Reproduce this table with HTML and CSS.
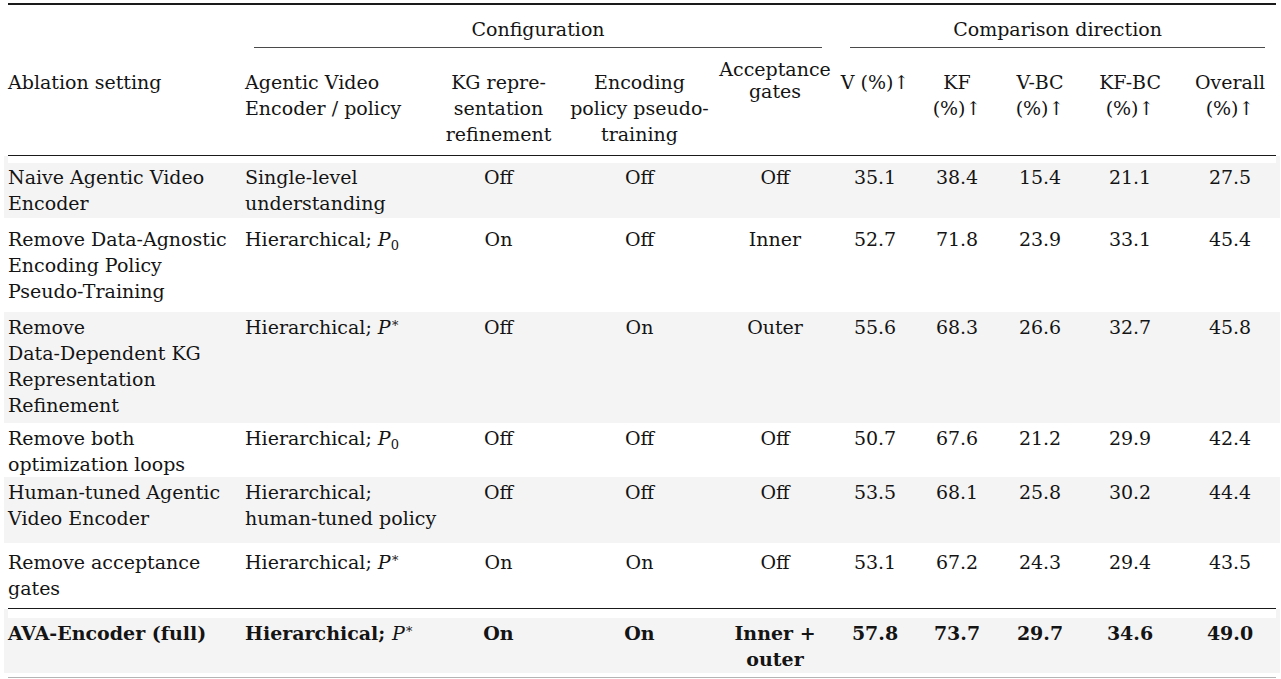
FILE: index.html
```html
<!DOCTYPE html>
<html lang="en">
<head>
<meta charset="utf-8">
<title>Ablation table</title>
<link rel="stylesheet" href="styles.css">
</head>
<body>
<div class="page">
<table class="ablation">
  <colgroup>
    <col class="w1"><col class="w2"><col class="w3"><col class="w4"><col class="w5">
    <col class="w6"><col class="w7"><col class="w8"><col class="w9"><col class="w10">
  </colgroup>
  <thead>
    <tr class="group">
      <th></th>
      <th colspan="4"><div class="cmid cmid-a">Configuration</div></th>
      <th colspan="5"><div class="cmid cmid-b">Comparison direction</div></th>
    </tr>
    <tr class="labels">
      <th class="left">Ablation setting</th>
      <th class="left pl">Agentic Video<br>Encoder / policy</th>
      <th>KG repre-<br>sentation<br>refinement</th>
      <th>Encoding<br>policy pseudo-<br>training</th>
      <th><div class="raised">Acceptance<br>gates</div></th>
      <th>V (%)↑</th>
      <th>KF<br>(%)↑</th>
      <th>V-BC<br>(%)↑</th>
      <th>KF-BC<br>(%)↑</th>
      <th>Overall<br>(%)↑</th>
    </tr>
  </thead>
  <tbody>
    <tr class="row r1 shade">
      <td class="left">Naive Agentic Video<br>Encoder</td>
      <td class="left pl">Single-level<br>understanding</td>
      <td>Off</td><td>Off</td><td>Off</td>
      <td>35.1</td><td>38.4</td><td>15.4</td><td>21.1</td><td>27.5</td>
    </tr>
    <tr class="row r2">
      <td class="left">Remove Data-Agnostic<br>Encoding Policy<br>Pseudo-Training</td>
      <td class="left pl">Hierarchical; <i class="m">P</i><sub>0</sub></td>
      <td>On</td><td>Off</td><td>Inner</td>
      <td>52.7</td><td>71.8</td><td>23.9</td><td>33.1</td><td>45.4</td>
    </tr>
    <tr class="row r3 shade">
      <td class="left">Remove<br>Data-Dependent KG<br>Representation<br>Refinement</td>
      <td class="left pl">Hierarchical; <i class="m">P</i><sup>∗</sup></td>
      <td>Off</td><td>On</td><td>Outer</td>
      <td>55.6</td><td>68.3</td><td>26.6</td><td>32.7</td><td>45.8</td>
    </tr>
    <tr class="row r4">
      <td class="left">Remove both<br>optimization loops</td>
      <td class="left pl">Hierarchical; <i class="m">P</i><sub>0</sub></td>
      <td>Off</td><td>Off</td><td>Off</td>
      <td>50.7</td><td>67.6</td><td>21.2</td><td>29.9</td><td>42.4</td>
    </tr>
    <tr class="row r5 shade">
      <td class="left">Human-tuned Agentic<br>Video Encoder</td>
      <td class="left pl">Hierarchical;<br>human-tuned policy</td>
      <td>Off</td><td>Off</td><td>Off</td>
      <td>53.5</td><td>68.1</td><td>25.8</td><td>30.2</td><td>44.4</td>
    </tr>
    <tr class="row r6">
      <td class="left">Remove acceptance<br>gates</td>
      <td class="left pl">Hierarchical; <i class="m">P</i><sup>∗</sup></td>
      <td>On</td><td>On</td><td>Off</td>
      <td>53.1</td><td>67.2</td><td>24.3</td><td>29.4</td><td>43.5</td>
    </tr>
    <tr class="row r7 shade full">
      <td class="left">AVA-Encoder (full)</td>
      <td class="left pl">Hierarchical; <i class="m">P</i><sup>∗</sup></td>
      <td>On</td><td>On</td><td>Inner +<br>outer</td>
      <td>57.8</td><td>73.7</td><td>29.7</td><td>34.6</td><td>49.0</td>
    </tr>
  </tbody>
</table>
<div class="endrule"></div>
</div>
</body>
</html>
```

FILE: styles.css
```css
html, body {
  margin: 0;
  padding: 0;
  background: #ffffff;
}

.page {
  padding: 3px 5px 0 8px;
}

.ablation {
  width: 1268px;
  table-layout: fixed;
  border-collapse: separate;
  border-spacing: 0;
  font-family: "DejaVu Serif", "Liberation Serif", serif;
  font-size: 19px;
  line-height: 26px;
  color: #141414;
}

.w1 { width: 232px; }
.w2 { width: 188px; }
.w3 { width: 141px; }
.w4 { width: 141px; }
.w5 { width: 130px; }
.w6 { width: 70px; }
.w7 { width: 94px; }
.w8 { width: 72px; }
.w9 { width: 108px; }
.w10 { width: 92px; }

.ablation th,
.ablation td {
  padding: 0;
  font-weight: normal;
  text-align: center;
  vertical-align: top;
  white-space: nowrap;
}

.ablation .left {
  text-align: left;
}

.ablation .pl {
  padding-left: 5px;
}

/* group header row */
.group th {
  border-top: 2px solid #1a1a1a;
  padding-top: 11px;
}

.cmid {
  border-bottom: 1px solid #4a4a4a;
  padding-bottom: 5px;
}

.cmid-a {
  margin: 0 18px 0 14px;
}

.cmid-b {
  margin: 0 11px 0 10px;
}

/* column label row */
.labels th {
  padding-top: 21px;
  padding-bottom: 8px;
  border-bottom: 1px solid #1a1a1a;
}

.raised {
  line-height: 22px;
  margin-top: -11px;
}

/* body rows */
.shade td {
  background: #f4f4f4;
}

.shade td:first-child {
  box-shadow: -4px 0 0 #f4f4f4;
}

.shade td:last-child {
  box-shadow: 4px 0 0 #f4f4f4;
}

.r1 td { border-top: 7px solid #ffffff; padding-top: 1px; padding-bottom: 2px; }
.r2 td { padding-top: 8px; padding-bottom: 8px; }
.r3 td { padding-top: 2px; padding-bottom: 5px; }
.r4 td { padding-top: 2px; padding-bottom: 0; }
.r5 td { padding-top: 2px; padding-bottom: 12px; }
.r6 td { padding-top: 6px; padding-bottom: 7px; border-bottom: 1px solid #1a1a1a; }
.r7 td { border-top: 9px solid #ffffff; padding-top: 2px; padding-bottom: 1px; }

.full td {
  font-weight: bold;
}

.m {
  font-style: italic;
  font-weight: normal;
}

.ablation sub,
.ablation sup {
  font-size: 13px;
  line-height: 0;
  font-weight: normal;
}

.ablation sub {
  vertical-align: -4px;
}

.ablation sup {
  vertical-align: 7px;
}

.endrule {
  width: 1268px;
  height: 1px;
  margin-top: 4px;
  background: #b5b5b5;
}
```
